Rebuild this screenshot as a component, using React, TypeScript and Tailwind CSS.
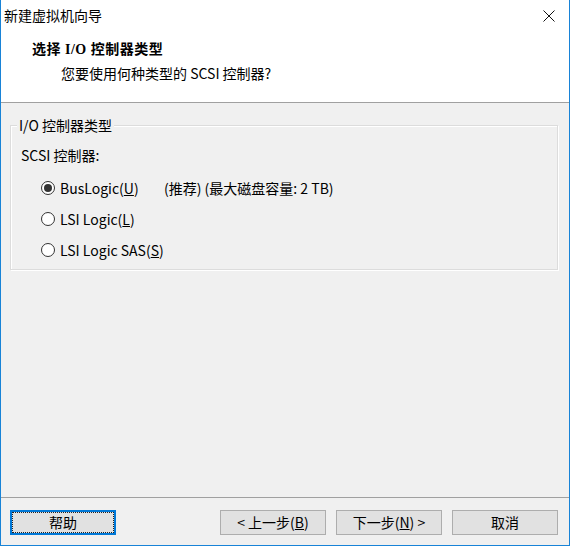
import React from "react";

const font = { fontFamily: '"Noto Sans CJK SC", "Microsoft YaHei", sans-serif' };
const titleFont = { fontFamily: '"Liberation Serif", "Noto Sans CJK SC", serif' };

function Radio({ checked }: { checked?: boolean }) {
  return (
    <span className="w-[14px] h-[14px] rounded-full border border-[#333333] bg-white flex items-center justify-center shrink-0">
      {checked && <span className="w-[8px] h-[8px] rounded-full bg-[#333333]" />}
    </span>
  );
}

function Btn({ children, def }: { children: React.ReactNode; def?: boolean }) {
  return (
    <div
      className={
        "w-[106px] h-[25px] flex items-center justify-center text-[14px] text-black bg-[#e1e1e1] " +
        (def ? "border-2 border-[#0078d7]" : "border border-[#adadad]")
      }
    >
      {def ? (
        <div className="w-full h-full border border-dotted border-[#222] flex items-center justify-center">{children}</div>
      ) : (
        children
      )}
    </div>
  );
}

export default function App() {
  return (
    <div className="w-[570px] h-[546px] flex flex-col bg-[#f0f0f0] border-l border-r border-b border-[#1883d7] text-black" style={font}>
      <div className="bg-white flex flex-col">
        <div className="h-[31px] flex items-center justify-between pl-[3px] pr-[14px]">
          <span className="text-[14px]">新建虚拟机向导</span>
          <svg width="12" height="12" viewBox="0 0 12 12">
            <path d="M0.5 0.5 L11.5 11.5 M11.5 0.5 L0.5 11.5" stroke="#111" strokeWidth="1" />
          </svg>
        </div>
        <div className="h-[71px] pl-[31px] pt-[9px]">
          <div className="text-[14px] font-bold leading-[20px] tracking-[0.5px]" style={titleFont}>选择 I/O 控制器类型</div>
          <div className="text-[14px] leading-[20px] pl-[29px] mt-[3px]">您要使用何种类型的 SCSI 控制器?</div>
        </div>
      </div>
      <div className="h-px bg-[#a0a0a0]" />
      <div className="flex-1 flex flex-col px-[9px] pt-[22px]">
        <div className="relative border border-[#dcdcdc] shadow-[inset_1px_1px_0_#ffffff,1px_1px_0_#ffffff] h-[145px] w-[548px] pt-[19px] px-[10px]">
          <span className="absolute left-[6px] -top-[11px] px-[2px] bg-[#f0f0f0] text-[14px] leading-[20px]">I/O 控制器类型</span>
          <div className="text-[14px] leading-[20px]">SCSI 控制器:</div>
          <div className="flex flex-col gap-[11px] pl-[20px] mt-[13px]">
            <div className="flex items-center h-[20px] text-[14px]">
              <Radio checked />
              <span className="ml-[5px] w-[104px]">BusLogic(<u>U</u>)</span>
              <span>(推荐) (最大磁盘容量: 2 TB)</span>
            </div>
            <div className="flex items-center h-[20px] text-[14px]">
              <Radio />
              <span className="ml-[5px]">LSI Logic(<u>L</u>)</span>
            </div>
            <div className="flex items-center h-[20px] text-[14px]">
              <Radio />
              <span className="ml-[5px]">LSI Logic SAS(<u>S</u>)</span>
            </div>
          </div>
        </div>
      </div>
      <div className="h-px bg-[#a0a0a0]" />
      <div className="h-[47px] flex items-start pt-[12px] pl-[9px] pr-[11px]">
        <Btn def>帮助</Btn>
        <div className="flex-1" />
        <div className="flex gap-[10px]">
          <Btn>&lt; 上一步(<u>B</u>)</Btn>
          <Btn>下一步(<u>N</u>) &gt;</Btn>
          <Btn>取消</Btn>
        </div>
      </div>
    </div>
  );
}
